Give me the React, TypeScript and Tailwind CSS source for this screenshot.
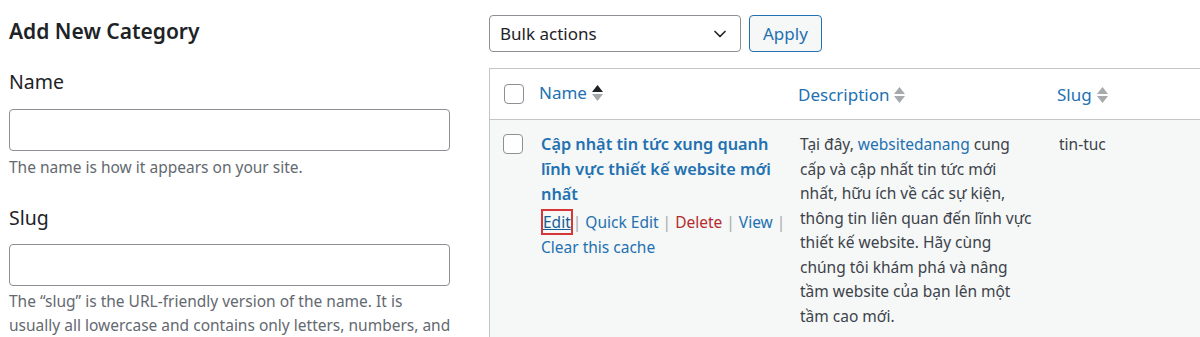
import { ChevronDown } from "lucide-react";

function SortIcon({ active = false }: { active?: boolean }) {
  return (
    <span className="ml-[5px] inline-flex flex-col gap-[2px] align-middle">
      <svg width="11" height="7" viewBox="0 0 11 7">
        <polygon points="5.5,0 11,7 0,7" fill={active ? "#1d2327" : "#a7aaad"} />
      </svg>
      <svg width="11" height="7" viewBox="0 0 11 7">
        <polygon points="0,0 11,0 5.5,7" fill="#a7aaad" />
      </svg>
    </span>
  );
}

function Checkbox() {
  return <span className="block h-[20px] w-[20px] rounded-[4px] border border-[#8c8f94] bg-white" />;
}

export default function App() {
  return (
    <div
      className="flex h-[337px] w-[1200px] overflow-hidden bg-white text-[#1d2327]"
      style={{ fontFamily: '"Noto Sans", "Open Sans", sans-serif' }}
    >
      {/* add new category form */}
      <div className="w-[450px] shrink-0 pl-[9px] pt-[16px]">
        <h2 className="text-[21px] font-semibold leading-[30px]">Add New Category</h2>

        <label className="mt-[22px] block text-[19.5px] leading-[28px]">Name</label>
        <input className="mt-[13px] block h-[42px] w-[441px] rounded-[4px] border border-[#8c8f94]" />
        <p className="mt-[4px] text-[15.5px] leading-[24px] text-[#646970]">The name is how it appears on your site.</p>

        <label className="mt-[25px] block text-[19.5px] leading-[28px]">Slug</label>
        <input className="mt-[12px] block h-[42px] w-[441px] rounded-[4px] border border-[#8c8f94]" />
        <p className="mt-[3px] w-[446px] text-[15.5px] leading-[24px] text-[#646970]">
          The “slug” is the URL-friendly version of the name. It is usually all lowercase and contains only letters,
          numbers, and hyphens.
        </p>
      </div>

      {/* categories table */}
      <div className="ml-[39px] flex-1 pt-[15px]">
        <div className="flex gap-[8px]">
          <div className="flex h-[37px] w-[252px] items-center justify-between rounded-[4px] border border-[#8c8f94] pl-[10px] pr-[10px] text-[17px]">
            <span>Bulk actions</span>
            <ChevronDown size={20} strokeWidth={2} className="text-[#1d2327]" />
          </div>
          <button className="h-[37px] rounded-[4px] border border-[#2271b1] bg-[#f6f7f7] px-[13px] text-[17px] text-[#2271b1]">
            Apply
          </button>
        </div>

        <div className="mt-[16px] w-[720px] border-l border-t border-[#c3c4c7]">
          <div className="flex h-[51px] items-center border-b border-[#c3c4c7] bg-white text-[17px] text-[#2271b1]">
            <div className="w-[40px] shrink-0 pl-[14px]">
              <Checkbox />
            </div>
            <div className="-mt-[3px] flex w-[259px] items-center pl-[9px]">
              Name
              <SortIcon active />
            </div>
            <div className="mt-[2px] flex w-[259px] items-center pl-[9px]">
              Description
              <SortIcon />
            </div>
            <div className="mt-[2px] flex items-center pl-[9px]">
              Slug
              <SortIcon />
            </div>
          </div>

          <div className="flex h-[220px] bg-[#f6f7f7] pt-[12px] text-[16px] leading-[24.5px]">
            <div className="w-[40px] shrink-0 pl-[13px] pt-[2px]">
              <Checkbox />
            </div>
            <div className="w-[259px] shrink-0 pl-[11px] pr-[8px]">
              <a className="block text-[16.3px] font-semibold leading-[25px] text-[#2271b1]">
                Cập nhật tin tức xung quanh lĩnh vực thiết kế website mới nhất
              </a>
              <div className="mt-[3px] text-[15.5px] text-[#2271b1]">
                <div className="whitespace-nowrap">
                  <a className="border-2 border-[#d63638] text-[#135e96] underline">Edit</a>
                  <span className="text-[#a7aaad]">|</span> Quick Edit <span className="text-[#a7aaad]">|</span>{" "}
                  <span className="text-[#b32d2e]">Delete</span> <span className="text-[#a7aaad]">|</span> View{" "}
                  <span className="text-[#a7aaad]">|</span>
                </div>
                <div>Clear this cache</div>
              </div>
            </div>
            <div className="w-[259px] shrink-0 pl-[11px] pr-[12px] text-[15.5px] text-[#3c434a]">
              Tại đây, <a className="text-[#2271b1]">websitedanang</a> cung cấp và cập nhất tin tức mới nhất, hữu ích về
              các sự kiện, thông tin liên quan đến lĩnh vực thiết kế website. Hãy cùng chúng tôi khám phá và nâng tầm
              website của bạn lên một tầm cao mới.
            </div>
            <div className="pl-[11px] text-[15.5px] text-[#3c434a]">tin-tuc</div>
          </div>
        </div>
      </div>
    </div>
  );
}
